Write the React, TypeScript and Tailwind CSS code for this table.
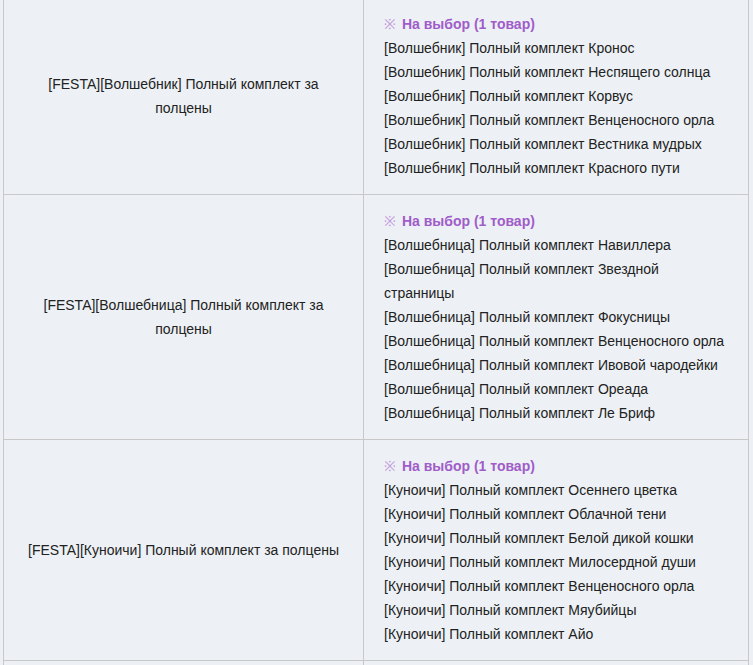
import React from 'react';

interface Row {
  title: string;
  items: string[];
}

const ROWS: Row[] = [
  {
    title: '[FESTA][Волшебник] Полный комплект за полцены',
    items: [
      '[Волшебник] Полный комплект Кронос',
      '[Волшебник] Полный комплект Неспящего солнца',
      '[Волшебник] Полный комплект Корвус',
      '[Волшебник] Полный комплект Венценосного орла',
      '[Волшебник] Полный комплект Вестника мудрых',
      '[Волшебник] Полный комплект Красного пути',
    ],
  },
  {
    title: '[FESTA][Волшебница] Полный комплект за полцены',
    items: [
      '[Волшебница] Полный комплект Навиллера',
      '[Волшебница] Полный комплект Звездной странницы',
      '[Волшебница] Полный комплект Фокусницы',
      '[Волшебница] Полный комплект Венценосного орла',
      '[Волшебница] Полный комплект Ивовой чародейки',
      '[Волшебница] Полный комплект Ореада',
      '[Волшебница] Полный комплект Ле Бриф',
    ],
  },
  {
    title: '[FESTA][Куноичи] Полный комплект за полцены',
    items: [
      '[Куноичи] Полный комплект Осеннего цветка',
      '[Куноичи] Полный комплект Облачной тени',
      '[Куноичи] Полный комплект Белой дикой кошки',
      '[Куноичи] Полный комплект Милосердной души',
      '[Куноичи] Полный комплект Венценосного орла',
      '[Куноичи] Полный комплект Мяубийцы',
      '[Куноичи] Полный комплект Айо',
    ],
  },
];

export default function App() {
  return (
    <div className="h-[665px] bg-[#edf1f5] overflow-hidden font-['Liberation_Sans',Arial,sans-serif] text-[14px] leading-[24px] text-[#222]">
      <div className="ml-[3px] -mt-[3px] w-[746px] border-x border-t border-[#c8c8c8]">
        {ROWS.map((row) => (
          <div key={row.title} className="flex border-b border-[#c8c8c8]">
            {/* product name */}
            <div className="w-[360px] shrink-0 border-r border-[#c8c8c8] px-5 py-[14px] flex items-center justify-center text-center">
              {row.title}
            </div>
            {/* choices */}
            <div className="w-[384px] px-5 py-[14px]">
              <p className="font-bold text-[#a05cc9]">
                <span className="font-normal text-[#c49be0] mr-[2px]">※</span> На выбор (1 товар)
              </p>
              {row.items.map((item) => (
                <p key={item}>{item}</p>
              ))}
            </div>
          </div>
        ))}
        {/* next row, cut off by the viewport */}
        <div className="flex h-[60px]">
          <div className="w-[360px] shrink-0 border-r border-[#c8c8c8]" />
          <div className="w-[384px]" />
        </div>
      </div>
    </div>
  );
}
